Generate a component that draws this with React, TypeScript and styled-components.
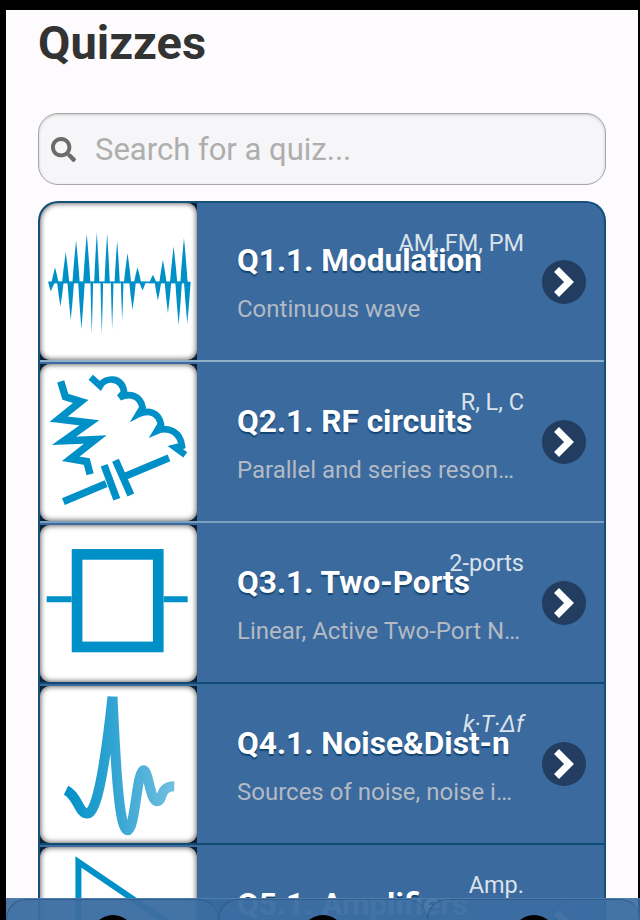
import styled, { createGlobalStyle } from "styled-components";
import { FaSearch } from "react-icons/fa";

const GlobalStyle = createGlobalStyle`
  html, body {
    margin: 0;
    height: 100%;
    overflow: hidden;
    background: #000;
    font-family: Roboto, "Liberation Sans", sans-serif;
  }
`;

const Page = styled.div`
  box-sizing: border-box;
  height: 910px;
  margin: 10px 2px 0 6px;
  padding: 0 32px;
  background: #fdfbfd;
  overflow: hidden;
`;

const Title = styled.h1`
  margin: 0;
  padding-top: 4px;
  font-size: 47px;
  line-height: 58px;
  font-weight: 700;
  color: #333;
`;

const SearchBox = styled.div`
  box-sizing: border-box;
  display: flex;
  align-items: center;
  gap: 19px;
  height: 72px;
  margin-top: 41px;
  padding-left: 12px;
  background: #f6f5f7;
  border: 1px solid #a5a5a5;
  border-radius: 20px;
  box-shadow: inset 0 1px 3px rgba(0, 0, 0, 0.18);
  color: #6b6b6b;
  font-size: 25px;
`;

const Placeholder = styled.span`
  font-size: 31px;
  color: #aeaeae;
`;

const List = styled.div`
  margin-top: 16px;
  border: solid #14507a;
  border-width: 2px 2px 0;
  border-radius: 20px 20px 0 0;
  background: #3a6a9e;
  overflow: hidden;
`;

const Row = styled.div<{ $line: string; $first?: boolean }>`
  position: relative;
  display: flex;
  height: ${(props) => (props.$first ? 159 : 161)}px;
  box-sizing: border-box;
  padding-top: ${(props) => (props.$first ? 0 : 2)}px;
  border-bottom: 2px solid ${(props) => props.$line};
`;

const Thumb = styled.div<{ $first?: boolean }>`
  flex: 0 0 157px;
  height: 157px;
  background: #0c2236;
  border-radius: ${(props) => (props.$first ? "18px 0 0 0" : "0")};
`;

const ThumbFace = styled.div<{ $first?: boolean }>`
  width: 157px;
  height: 157px;
  background: #fff;
  border-radius: ${(props) => (props.$first ? "18px 10px 10px 10px" : "10px")};
  box-shadow: inset 0 0 5px 1px rgba(60, 60, 60, 0.75);

  svg {
    display: block;
    width: 157px;
    height: 157px;
  }
`;

const Body = styled.div`
  flex: 1;
  min-width: 0;
  display: flex;
  flex-direction: column;
  padding: 38px 79px 0 40px;
`;

const RowTitle = styled.h2`
  margin: 0;
  font-size: 31.6px;
  line-height: 40px;
  font-weight: 700;
  color: #fff;
  white-space: nowrap;
  text-shadow: 0 2px 1px #14456f;
`;

const RowSub = styled.p`
  margin: 13px 0 0;
  font-size: 24px;
  line-height: 30px;
  color: #b3bac4;
  white-space: nowrap;
  overflow: hidden;
  text-overflow: ellipsis;
`;

const Count = styled.span<{ $italic?: boolean }>`
  position: absolute;
  top: 25px;
  right: 80px;
  font-size: 23.5px;
  line-height: 30px;
  font-style: ${(props) => (props.$italic ? "italic" : "normal")};
  color: #dbe2ea;
`;

const Arrow = styled.span<{ $first?: boolean }>`
  position: absolute;
  top: ${(props) => (props.$first ? 57 : 58)}px;
  right: 18px;
  width: 44px;
  height: 44px;
  border-radius: 50%;
  background: #223d60;

  svg {
    display: block;
    width: 44px;
    height: 44px;
  }
`;

const TabBar = styled.nav`
  box-sizing: border-box;
  position: fixed;
  left: 6px;
  right: 0;
  bottom: 0;
  height: 22px;
  display: grid;
  grid-template-columns: 212px 209px 1fr;
  background: rgba(58, 106, 158, 0.9);
  border-top: 1px solid #4f7dac;
  overflow: hidden;
`;

const Tab = styled.div`
  display: flex;
  justify-content: center;
  padding-top: 15px;
  border: solid #2f5c8d;
  border-width: 1px 0 0 1px;
  border-radius: 20px 20px 0 0;
  background: rgba(64, 112, 165, 0.6);
`;

const TabIcon = styled.span`
  flex: 0 0 44px;
  width: 44px;
  height: 44px;
  border-radius: 50%;
  background: #000;
`;

const BLUE = "#0090c8";

// spike tips of the modulation picture, x then y, in 3x thumb units
const UP = [[45, 193], [77, 147], [108, 112], [140, 93], [170, 87], [201, 91], [231, 113], [262, 150], [292, 192], [338, 215], [368, 171], [400, 130], [431, 105]];
const DOWN = [[61, 310], [92, 350], [124, 378], [155, 392], [185, 393], [216, 378], [246, 352], [277, 320], [307, 262], [353, 292], [383, 330], [415, 365], [441, 360]];

const spike = (x: number, y: number, half: number, base: number) =>
  `M${x - half} ${base} Q${x - half * 0.6} ${(y + base) / 2} ${x} ${y} Q${x + half * 0.6} ${(y + base) / 2} ${x + half} ${base} Z`;

const WaveIcon = () => (
  <svg viewBox="0 0 470 470">
    <rect x="25" y="235" width="418" height="5" fill={BLUE} />
    {UP.map(([x, y]) => (
      <path key={x} d={spike(x, y, x > 150 && x < 240 ? 8 : 11, 240)} fill={BLUE} />
    ))}
    {DOWN.map(([x, y], i) => (
      <path key={x} d={spike(x, y, i > 2 && i < 7 ? 4 : 10, 236)} fill={BLUE} />
    ))}
    <polygon points="25,238 32,265 44,238" fill={BLUE} />
  </svg>
);

const CircuitIcon = () => (
  <svg viewBox="0 0 470 470" fill="none" stroke={BLUE} strokeWidth="22">
    <path d="M62 52 L76 98 L122 112 L56 165 L148 176 L72 230 L166 226 L92 284 L140 292 L150 330" />
    <path d="M152 40 L180 65 C 195 40 245 35 252 85 L 238 100 C 270 85 300 95 307 130 L 295 150 C 325 135 355 145 362 180 L 350 200 C 385 185 420 205 425 245 L 405 250 L 435 272" strokeWidth="20" />
    <path d="M70 412 L198 358 M192 303 L230 405 M226 288 L272 392 M256 336 L386 281" />
  </svg>
);

const PortIcon = () => (
  <svg viewBox="0 0 470 470" fill="none" stroke={BLUE}>
    <rect x="111" y="88" width="243" height="277" strokeWidth="32" />
    <path d="M20 222 H95 M370 222 H442" strokeWidth="18" />
  </svg>
);

const NoiseIcon = () => (
  <svg viewBox="0 0 470 470" fill="none" strokeWidth="30">
    <defs>
      <linearGradient id="noise-fade" x1="0" x2="1" y1="0" y2="0">
        <stop offset="0" stopColor="#0090c8" />
        <stop offset="1" stopColor="#72bfe0" />
      </linearGradient>
    </defs>
    <path
      d="M78 312 C 115 330 115 382 142 382 C 170 382 195 240 217 32 M217 32 C 225 200 235 432 262 432 C 285 432 290 250 310 252 C 325 254 330 345 350 345 C 370 345 355 300 402 300"
      stroke="url(#noise-fade)"
    />
  </svg>
);

const AmpIcon = () => (
  <svg viewBox="0 0 470 470" fill="none" stroke={BLUE} strokeWidth="18">
    <path d="M115 45 V400 L380 225 Z" />
  </svg>
);

const Chevron = () => (
  <svg viewBox="0 0 44 44" fill="none" stroke="#fff" strokeWidth="7" strokeLinecap="square">
    <path d="M17 12 L27 22 L17 32" />
  </svg>
);

const quizzes = [
  { title: "Q1.1. Modulation", sub: "Continuous wave", count: "AM, FM, PM", icon: <WaveIcon />, line: "#8fb0c8" },
  { title: "Q2.1. RF circuits", sub: "Parallel and series resonance circuits", count: "R, L, C", icon: <CircuitIcon />, line: "#7d9fbe" },
  { title: "Q3.1. Two-Ports", sub: "Linear, Active Two-Port Networks", count: "2-ports", icon: <PortIcon />, line: "#0f4a72" },
  { title: "Q4.1. Noise&Dist-n", sub: "Sources of noise, noise in amplifiers", count: "k·T·Δf", italic: true, icon: <NoiseIcon />, line: "#0f4a72" },
  { title: "Q5.1. Amplifiers", sub: "Small signal amplifiers", count: "Amp.", icon: <AmpIcon />, line: "#0f4a72" },
];

const App = () => {
  return (
    <>
      <GlobalStyle />
      <Page>
        <Title>Quizzes</Title>
        <SearchBox>
          <FaSearch />
          <Placeholder>Search for a quiz...</Placeholder>
        </SearchBox>
        <List>
          {quizzes.map((quiz, i) => (
            <Row key={quiz.title} $line={quiz.line} $first={i === 0}>
              <Thumb $first={i === 0}>
                <ThumbFace $first={i === 0}>{quiz.icon}</ThumbFace>
              </Thumb>
              <Body>
                <RowTitle>{quiz.title}</RowTitle>
                <RowSub>{quiz.sub}</RowSub>
              </Body>
              <Count $italic={quiz.italic}>{quiz.count}</Count>
              <Arrow $first={i === 0}>
                <Chevron />
              </Arrow>
            </Row>
          ))}
        </List>
      </Page>
      <TabBar>
        <Tab>
          <TabIcon />
        </Tab>
        <Tab>
          <TabIcon />
        </Tab>
        <Tab>
          <TabIcon />
        </Tab>
      </TabBar>
    </>
  );
};

export default App;
